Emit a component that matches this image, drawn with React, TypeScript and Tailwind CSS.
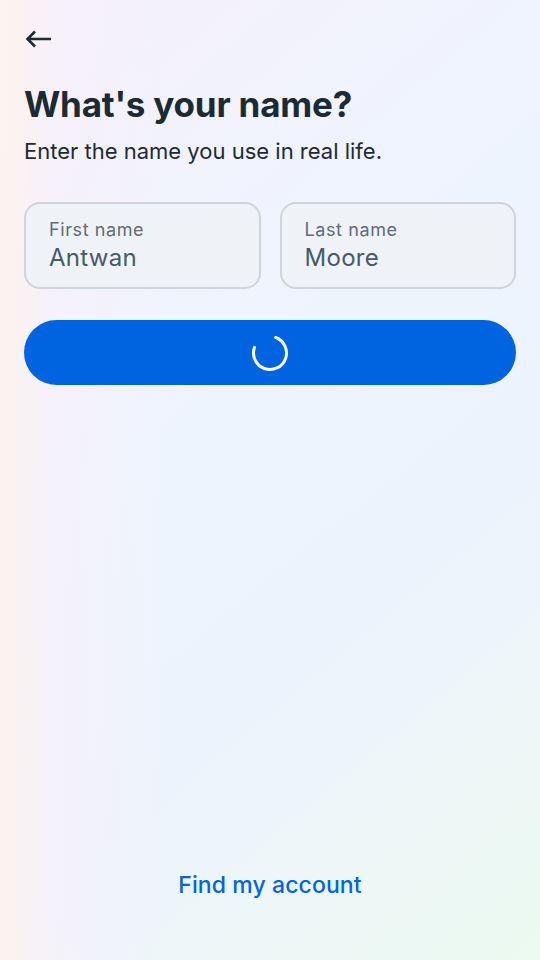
import React from 'react';

const Field = ({ label, value }: { label: string; value: string }) => {
  return (
    <div className="flex-1 h-[87px] rounded-[16px] border-2 border-[#cdd4dc] bg-[#eff3f7] pl-[23px] pt-[12px] flex flex-col">
      <span className="text-[18px] leading-[27px] text-[#5d6c7b] tracking-[0.6px]">{label}</span>
      <span className="text-[24px] leading-[30px] text-[#465a69] tracking-[0.3px]">{value}</span>
    </div>
  );
};

const App = () => {
  return (
    <div
      className="w-[540px] h-[960px] flex flex-col px-6 bg-[linear-gradient(90deg,#fdf3ee_0%,rgba(248,240,248,0.6)_10%,rgba(240,243,252,0)_30%),linear-gradient(140deg,#f5f0fb_0%,#eef4fe_40%,#edf3fc_65%,#ecfaf1_100%)]"
      style={{ fontFamily: 'Inter, "Noto Sans", sans-serif' }}
    >
      {/* back arrow */}
      <div className="pt-[30px] h-[58px]">
        <svg width="28" height="18" viewBox="0 0 28 18" className="ml-[1px]">
          <path d="M26 9H3M10 1.5L2.5 9L10 16.5" fill="none" stroke="#1c2b33" strokeWidth="2.6" />
        </svg>
      </div>

      <h1 className="mt-[24px] text-[35px] leading-[44px] font-bold text-[#1c2b33] tracking-[-0.2px]">What's your name?</h1>
      <p className="mt-[10px] text-[22px] leading-[30px] text-[#1c2b33]">Enter the name you use in real life.</p>

      <div className="mt-[36px] flex gap-[19px]">
        <Field label="First name" value="Antwan" />
        <Field label="Last name" value="Moore" />
      </div>

      <button className="mt-[31px] h-[65px] w-full rounded-full bg-[#0064e0] flex items-center justify-center">
        <svg width="38" height="38" viewBox="0 0 38 38">
          <path
            d="M19 2.5A16.5 16.5 0 1 1 2.5 19"
            fill="none"
            stroke="#ffffff"
            strokeWidth="3"
            strokeLinecap="round"
            transform="rotate(20 19 19)"
          />
        </svg>
      </button>

      <div className="flex-1" />

      <div className="pb-[60px] flex justify-center">
        <span className="text-[23px] leading-[30px] font-medium text-[#0064e0] tracking-[0.1px]">Find my account</span>
      </div>
    </div>
  );
};

export default App;
